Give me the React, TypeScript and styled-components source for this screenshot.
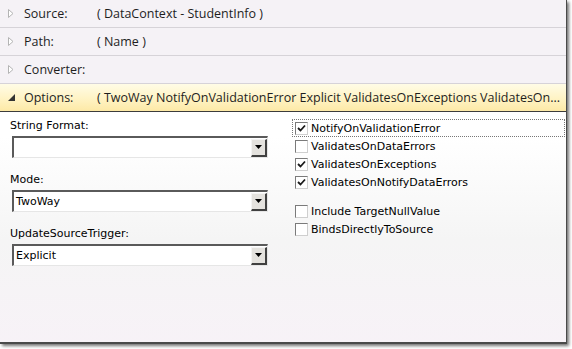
import React from 'react';
import styled, { createGlobalStyle } from 'styled-components';

const Global = createGlobalStyle`
  html, body { margin: 0; padding: 0; background: #ffffff; }
  body { font-family: "Open Sans", "DejaVu Sans", sans-serif; }
`;

const Page = styled.div`
  width: 572px;
  height: 349px;
  background: #ffffff;
  overflow: hidden;
`;

const Frame = styled.div`
  width: 566px;
  height: 342px;
  border-right: 1px solid #4a4a4a;
  border-bottom: 2px solid #4a4a4a;
  box-shadow: 2px 2px 3px rgba(0, 0, 0, 0.55);
  display: flex;
  flex-direction: column;
  background: linear-gradient(#ffffff 0%, #ffffff 40%, #f5f5f5 70%, #f7f2f7 100%);
`;

const Row = styled.div<{ $open?: boolean }>`
  height: 27px;
  flex-shrink: 0;
  display: flex;
  align-items: center;
  font-size: 12.5px;
  color: #1e1e1e;
  border-bottom: 1px solid ${(p) => (p.$open ? '#3c3c3c' : '#d6d3d8')};
  background: ${(p) =>
    p.$open ? 'linear-gradient(#fffce6, #fff3c4 55%, #fde9a6)' : '#f5f2f6'};
`;

const Arrow = styled.span`
  width: 16px;
  padding-left: 8px;
  display: flex;
  align-items: center;
`;

const Label = styled.span`
  width: 73px;
  white-space: nowrap;
`;

const Value = styled.span`
  white-space: nowrap;
  overflow: hidden;
`;

const Body = styled.div`
  flex: 1;
  display: grid;
  grid-template-columns: 282px 1fr;
  padding-top: 6px;
  font-family: Tahoma, "DejaVu Sans", "Liberation Sans", sans-serif;
  font-size: 11px;
  color: #000;
`;

const Column = styled.div`
  display: flex;
  flex-direction: column;
`;

const FieldLabel = styled.div`
  padding-left: 10px;
  height: 15px;
  line-height: 15px;
  margin-bottom: 3px;
`;

const Combo = styled.div`
  margin-left: 12px;
  width: 256px;
  height: 22px;
  box-sizing: border-box;
  border-style: solid;
  border-width: 2px 1px 1px 2px;
  border-color: #5a5a5a #e6e6e6 #e6e6e6 #5a5a5a;
  background: #ffffff;
  display: flex;
  align-items: center;
  margin-bottom: 14px;
`;

const ComboText = styled.span`
  flex: 1;
  padding-left: 2px;
`;

const ComboButton = styled.span`
  width: 16px;
  height: 18px;
  box-sizing: border-box;
  background: #e4e2de;
  border-style: solid;
  border-width: 1px 2px 2px 1px;
  border-color: #f4f4f4 #404040 #404040 #f4f4f4;
  display: flex;
  align-items: center;
  justify-content: center;
`;

const CheckList = styled.div`
  display: flex;
  flex-direction: column;
  padding-top: 1px;
`;

const CheckRow = styled.div<{ $focus?: boolean; $gap?: boolean }>`
  display: flex;
  align-items: center;
  height: 16px;
  margin-top: ${(p) => (p.$gap ? '11px' : '0')};
  margin-left: 10px;
  margin-right: 1px;
  padding-left: 2px;
  border: 1px dotted ${(p) => (p.$focus ? '#777' : 'transparent')};
`;

const Box = styled.span`
  width: 13px;
  height: 13px;
  box-sizing: border-box;
  border-style: solid;
  border-width: 1px;
  border-color: #7a7a7a #cfcfcf #cfcfcf #7a7a7a;
  background: #ffffff;
  margin-right: 3px;
  display: flex;
  align-items: center;
  justify-content: center;
`;

const Closed = () => (
  <svg width="6" height="9" viewBox="0 0 6 9">
    <path d="M0.5 0.5 L5 4.5 L0.5 8.5 Z" fill="#fff" stroke="#b4b4b4" />
  </svg>
);

const Opened = () => (
  <svg width="7" height="7" viewBox="0 0 7 7">
    <path d="M7 0 L7 7 L0 7 Z" fill="#333" />
  </svg>
);

const Down = () => (
  <svg width="7" height="4" viewBox="0 0 7 4">
    <path d="M0 0 L7 0 L3.5 4 Z" fill="#000" />
  </svg>
);

const Tick = () => (
  <svg width="9" height="9" viewBox="0 0 9 9">
    <path d="M1 4 L3.5 6.5 L8 1.5" fill="none" stroke="#1a1a1a" strokeWidth="1.8" />
  </svg>
);

const rows = [
  { label: 'Source:', value: '( DataContext - StudentInfo )' },
  { label: 'Path:', value: '( Name )' },
  { label: 'Converter:', value: '' },
];

const fields = [
  { label: 'String Format:', value: '' },
  { label: 'Mode:', value: 'TwoWay' },
  { label: 'UpdateSourceTrigger:', value: 'Explicit' },
];

const checks = [
  { text: 'NotifyOnValidationError', on: true, focus: true },
  { text: 'ValidatesOnDataErrors', on: false },
  { text: 'ValidatesOnExceptions', on: true },
  { text: 'ValidatesOnNotifyDataErrors', on: true },
  { text: 'Include TargetNullValue', on: false, gap: true },
  { text: 'BindsDirectlyToSource', on: false },
];

export default function App() {
  return (
    <Page>
      <Global />
      <Frame>
        {rows.map((r) => (
          <Row key={r.label}>
            <Arrow>
              <Closed />
            </Arrow>
            <Label>{r.label}</Label>
            <Value>{r.value}</Value>
          </Row>
        ))}
        <Row $open>
          <Arrow>
            <Opened />
          </Arrow>
          <Label>Options:</Label>
          <Value>( TwoWay NotifyOnValidationError Explicit ValidatesOnExceptions ValidatesOn...</Value>
        </Row>
        <Body>
          <Column>
            {fields.map((f) => (
              <React.Fragment key={f.label}>
                <FieldLabel>{f.label}</FieldLabel>
                <Combo>
                  <ComboText>{f.value}</ComboText>
                  <ComboButton>
                    <Down />
                  </ComboButton>
                </Combo>
              </React.Fragment>
            ))}
          </Column>
          <CheckList>
            {checks.map((c) => (
              <CheckRow key={c.text} $focus={c.focus} $gap={c.gap}>
                <Box>{c.on && <Tick />}</Box>
                {c.text}
              </CheckRow>
            ))}
          </CheckList>
        </Body>
      </Frame>
    </Page>
  );
}
